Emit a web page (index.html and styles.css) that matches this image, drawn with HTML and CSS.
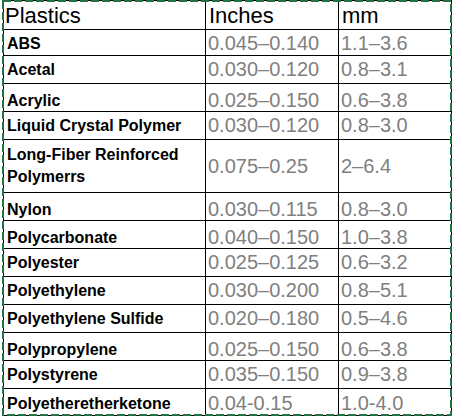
FILE: index.html
```html
<!DOCTYPE html>
<html>
<head>
<meta charset="utf-8">
<link rel="stylesheet" href="styles.css">
</head>
<body>
<div class="sheet">
  <div class="grid">
    <div class="c h name">Plastics</div><div class="c h v1">Inches</div><div class="c h v2">mm</div>
    <div class="c n abs">ABS</div><div class="c v v1 abs">0.045–0.140</div><div class="c v v2 abs">1.1–3.6</div>
    <div class="c n">Acetal</div><div class="c v v1">0.030–0.120</div><div class="c v v2">0.8–3.1</div>
    <div class="c n lo">Acrylic</div><div class="c v v1 lo">0.025–0.150</div><div class="c v v2 lo">0.6–3.8</div>
    <div class="c n">Liquid Crystal Polymer</div><div class="c v v1">0.030–0.120</div><div class="c v v2">0.8–3.0</div>
    <div class="c n wrap">Long-Fiber Reinforced Polymerrs</div><div class="c v v1">0.075–0.25</div><div class="c v v2">2–6.4</div>
    <div class="c n lo">Nylon</div><div class="c v v1 lo">0.030–0.115</div><div class="c v v2 lo">0.8–3.0</div>
    <div class="c n lo">Polycarbonate</div><div class="c v v1 lo">0.040–0.150</div><div class="c v v2 lo">1.0–3.8</div>
    <div class="c n">Polyester</div><div class="c v v1">0.025–0.125</div><div class="c v v2">0.6–3.2</div>
    <div class="c n">Polyethylene</div><div class="c v v1">0.030–0.200</div><div class="c v v2">0.8–5.1</div>
    <div class="c n">Polyethylene Sulfide</div><div class="c v v1">0.020–0.180</div><div class="c v v2">0.5–4.6</div>
    <div class="c n lo">Polypropylene</div><div class="c v v1 lo">0.025–0.150</div><div class="c v v2 lo">0.6–3.8</div>
    <div class="c n">Polystyrene</div><div class="c v v1">0.035–0.150</div><div class="c v v2">0.9–3.8</div>
    <div class="c n last">Polyetheretherketone</div><div class="c v v1 last">0.04-0.15</div><div class="c v v2 last">1.0-4.0</div>
  </div>
  <svg class="marquee" width="450" height="416" viewBox="0 0 450 416">
    <rect x="1" y="1" width="448" height="414" fill="none" stroke="#217346" stroke-width="2" stroke-dasharray="8 3"/>
  </svg>
</div>
</body>
</html>
```
FILE: styles.css
```css
html, body {
  margin: 0;
  padding: 0;
  background: #ffffff;
}
.sheet {
  position: relative;
  width: 452px;
  height: 416px;
}
.grid {
  margin-left: 3px;
  width: 449px;
  display: grid;
  grid-template-columns: 201px 132px 112px;
  grid-template-rows: 28px 25px 27px 27px 27px 52px 27px 27px 27px 27px 27px 27px 27px 26px;
  gap: 1px;
  padding: 1px;
  box-sizing: border-box;
  background: #000;
  font-family: "Liberation Sans", Arial, sans-serif;
}
.c {
  background: #fff;
  display: flex;
  align-items: center;
  white-space: nowrap;
  overflow: hidden;
  box-sizing: border-box;
}
.h {
  font-size: 22px;
  color: #000;
  align-items: flex-end;
  padding-bottom: 0;
}
.h.name { padding-left: 1px; }
.h.v1 { padding-left: 3px; }
.h.v2 { padding-left: 3px; }
.n {
  font-size: 16px;
  font-weight: bold;
  color: #000;
  padding-left: 3px;
}
.wrap {
  white-space: normal;
  line-height: 22px;
}
.v {
  font-size: 20px;
  color: #7f7f7f;
}
.v.v1 { padding-left: 2px; }
.v.v2 { padding-left: 2px; }
.abs { padding-top: 2px; }
.lo { padding-top: 6px; }
.last { padding-top: 3px; }
.marquee {
  position: absolute;
  left: 2px;
  top: 0;
  pointer-events: none;
}
```
